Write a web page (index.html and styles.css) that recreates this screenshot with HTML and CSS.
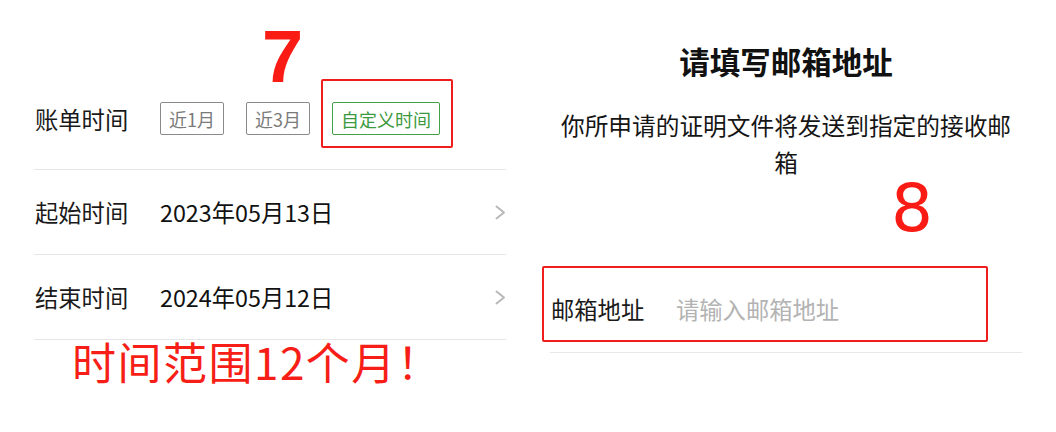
FILE: index.html
```html
<!DOCTYPE html>
<html lang="zh-CN">
<head>
<meta charset="utf-8">
<title>账单时间与邮箱</title>
<link rel="stylesheet" href="styles.css">
</head>
<body>
<main class="page">
  <section class="left">
    <span class="num num7">7</span>
    <div class="row row-first">
      <span class="label">账单时间</span>
      <div class="chips">
        <span class="chip">近1月</span>
        <span class="chip">近3月</span>
        <span class="chip chip-active">自定义时间<span class="mark-box mark-chip"></span></span>
      </div>
    </div>
    <div class="row">
      <span class="label">起始时间</span>
      <span class="value">2023年05月13日</span>
      <svg class="chev" viewBox="0 0 11 15" width="11" height="15"><polyline points="1.5,1.5 9,7.5 1.5,13.5" fill="none" stroke="#b8b8b8" stroke-width="2" stroke-linecap="round" stroke-linejoin="round"/></svg>
    </div>
    <div class="row">
      <span class="label">结束时间</span>
      <span class="value">2024年05月12日</span>
      <svg class="chev" viewBox="0 0 11 15" width="11" height="15"><polyline points="1.5,1.5 9,7.5 1.5,13.5" fill="none" stroke="#b8b8b8" stroke-width="2" stroke-linecap="round" stroke-linejoin="round"/></svg>
    </div>
    <p class="note">时间范围12个月！</p>
  </section>
  <section class="right">
    <h1 class="title">请填写邮箱地址</h1>
    <p class="desc">你所申请的证明文件将发送到指定的接收邮箱</p>
    <span class="num num8">8</span>
    <div class="form-row">
      <label class="label" for="email">邮箱地址</label>
      <input class="input" id="email" type="text" placeholder="请输入邮箱地址">
      <span class="mark-box mark-form"></span>
    </div>
  </section>
</main>
</body>
</html>
```
FILE: styles.css
```css
* { box-sizing: border-box; }
html, body {
  margin: 0;
  padding: 0;
  background: #ffffff;
}
body {
  font-family: "Noto Sans CJK SC", "Noto Sans", sans-serif;
  color: #151515;
}
.page {
  display: flex;
  width: 1056px;
  height: 432px;
  overflow: hidden;
}
.left {
  position: relative;
  width: 540px;
  padding: 68px 34px 0 34px;
}
.right {
  position: relative;
  width: 516px;
  padding: 0 34px 0 10px;
  display: flex;
  flex-direction: column;
}
.row {
  display: flex;
  align-items: center;
  height: 85px;
  border-bottom: 1px solid #e6e6e6;
}
.row-first {
  height: 102px;
}
.label {
  width: 126px;
  flex: none;
  padding-left: 1px;
  font-size: 23.3px;
  color: #1a1a1a;
  white-space: nowrap;
}
.value {
  flex: 1;
  font-size: 23.3px;
  color: #111111;
  white-space: nowrap;
}
.chev {
  flex: none;
  display: block;
}
.chips {
  display: flex;
  align-items: center;
  gap: 22px;
}
.chip {
  position: relative;
  display: inline-flex;
  align-items: center;
  height: 33px;
  padding: 0 8px;
  border: 1.5px solid #8a8a8a;
  border-radius: 2px;
  font-size: 18px;
  color: #7a7a7a;
  white-space: nowrap;
}
.chip-active {
  border-color: #44a046;
  color: #3c9a3e;
}
.mark-box {
  position: absolute;
  border: 2px solid #f01d1d;
  border-radius: 2px;
  pointer-events: none;
}
.mark-chip {
  left: -12px;
  right: -14px;
  top: -24px;
  bottom: -14px;
}
.num {
  position: absolute;
  color: #fa1c14;
}
.num7 {
  left: 262px;
  top: 30px;
  font-family: "Liberation Sans", Arial, sans-serif;
  font-weight: 700;
  font-size: 74px;
  line-height: 54px;
}
.num8 {
  left: 351px;
  top: 184px;
  font-family: "DejaVu Sans", sans-serif;
  font-weight: 400;
  font-size: 66px;
  line-height: 50px;
}
.note {
  margin: -5px 0 0 0;
  padding-left: 38px;
  font-size: 44px;
  line-height: 52px;
  letter-spacing: 1.5px;
  color: #f61e16;
  white-space: nowrap;
}
.title {
  margin: 41px 0 0 0;
  font-size: 30.5px;
  line-height: 40px;
  font-weight: 700;
  text-align: center;
  color: #111111;
}
.desc {
  margin: 26px 0 0 0;
  font-size: 23.7px;
  line-height: 37px;
  text-align: center;
  color: #151515;
}
.form-row {
  position: relative;
  display: flex;
  align-items: center;
  height: 88px;
  margin-top: 84px;
  border-bottom: 1px solid #e8e8e8;
}
.input {
  flex: 1;
  min-width: 0;
  border: none;
  outline: none;
  padding: 0;
  background: transparent;
  font-family: "Noto Sans CJK SC", "Noto Sans", sans-serif;
  font-size: 23.3px;
  color: #151515;
}
.input::placeholder {
  color: #b3b3b3;
}
.mark-form {
  left: -8px;
  top: 1px;
  width: 446px;
  height: 76px;
}
```
